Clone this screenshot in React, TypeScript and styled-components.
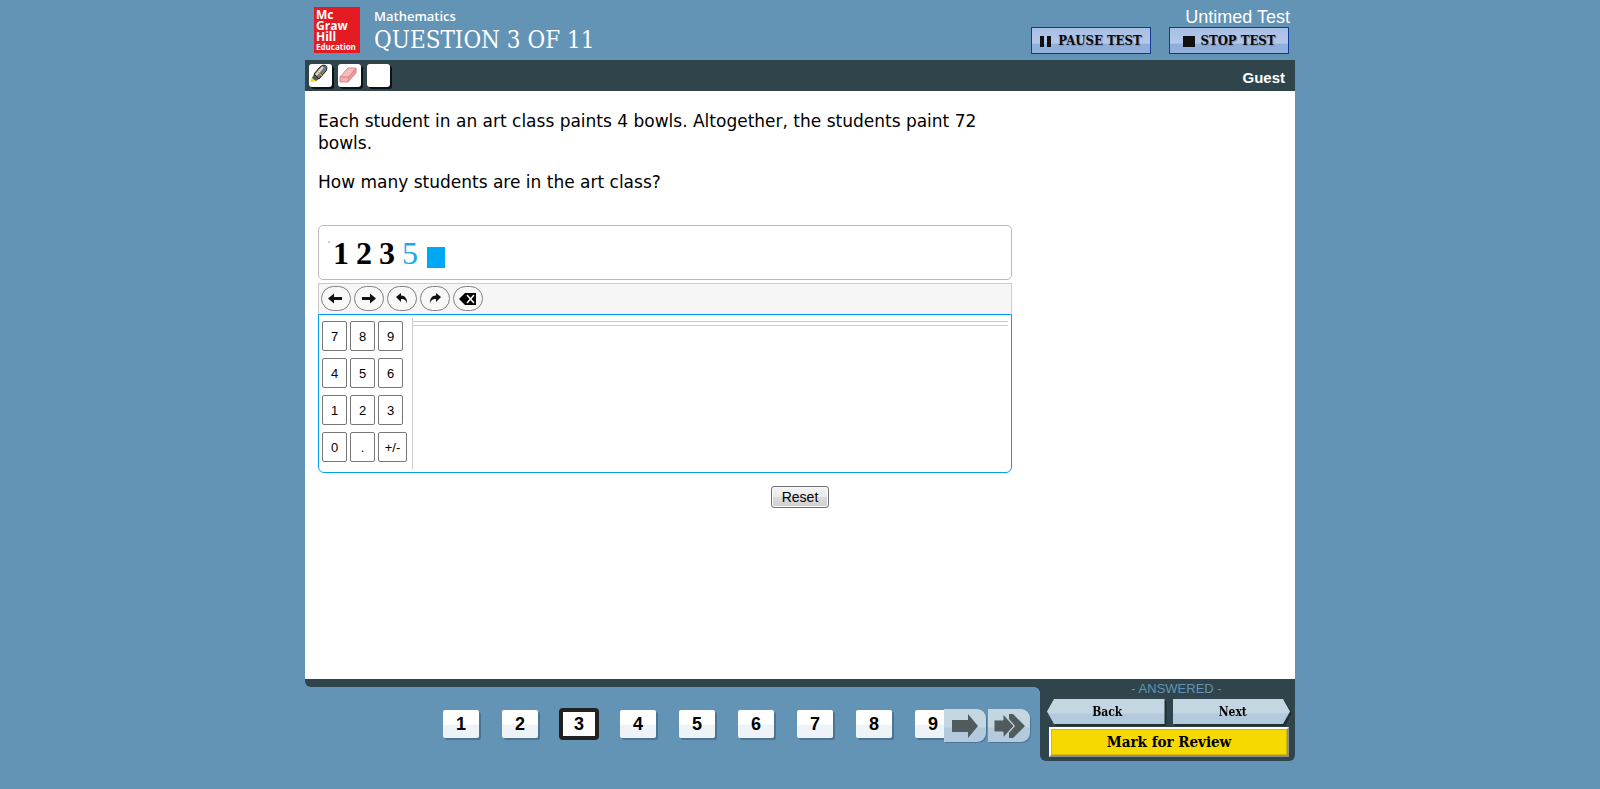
import React from 'react';
import styled, { createGlobalStyle, css } from 'styled-components';

const blue = '#6393b5';
const dark = '#2f454b';
const slab = "'DejaVu Serif Condensed', 'DejaVu Serif', serif";
const sans = "'Liberation Sans', Arial, sans-serif";
const humanist = "'Open Sans', 'Noto Sans', sans-serif";

const GlobalStyle = createGlobalStyle`
  * { box-sizing: border-box; }
  body { margin: 0; background: ${blue}; font-family: ${sans}; color: #000; }
  button { font: inherit; color: inherit; padding: 0; cursor: pointer; }
`;

const Page = styled.div`
  display: flex;
  flex-direction: column;
  max-width: 990px;
  min-height: 100vh;
  margin: 0 auto;
  padding-bottom: 28px;
`;

const Header = styled.header`
  display: flex;
  height: 60px;
  padding: 7px 5px 0 9px;
`;

const Logo = styled.div`
  display: flex;
  flex-direction: column;
  width: 46px;
  height: 46px;
  padding: 2px;
  background: #e51b24;
  color: #fff;
  font: 700 12px/11px ${humanist};
`;

const LogoSmall = styled.span`
  font-size: 8px;
  line-height: 10px;
`;

const Titles = styled.div`
  flex: 1;
  padding-left: 14px;
  color: #fff;
`;

const Subject = styled.div`
  font: 600 13px/18px ${humanist};
`;

const Title = styled.h1`
  margin: 0;
  font: 400 24px/30px ${slab};
`;

const Session = styled.div`
  display: flex;
  flex-direction: column;
  align-items: flex-end;
  color: #fff;
  font-size: 18px;
  line-height: 20px;
`;

const TestControls = styled.div`
  display: flex;
  gap: 18px;
  padding-right: 1px;
`;

const TestButton = styled.button`
  display: flex;
  align-items: center;
  justify-content: center;
  gap: 6px;
  width: 120px;
  height: 27px;
  border: 1px solid #12399a;
  background: linear-gradient(#a8bfe4, #b4c8e9 60%, #8faedb 65%, #93b0dc);
  color: #0c0a0c;
  font: 700 13px/24px ${slab};
  white-space: nowrap;
  text-shadow: 1px 1px 1px #8394b4;
`;

const Toolbar = styled.div`
  display: flex;
  align-items: center;
  gap: 6px;
  height: 31px;
  padding: 0 10px 0 4px;
  background: ${dark};
`;

const Tool = styled.button`
  display: flex;
  width: 23px;
  height: 23px;
  border: 0;
  border-radius: 3px;
  background: #fff;
  box-shadow: 2px 2px 0 #0b1214;
`;

const User = styled.span`
  margin-left: auto;
  padding-top: 4px;
  color: #fff;
  font-size: 15px;
  font-weight: 700;
`;

const Content = styled.main`
  flex: 1;
  padding: 19px 13px;
  background: #fff;
`;

const Question = styled.div`
  max-width: 694px;
  font: 400 17px/22px 'DejaVu Sans', Verdana, sans-serif;

  p { margin: 0 0 17px; }
`;

const Editor = styled.section`
  max-width: 694px;
  padding-top: 15px;
`;

const AnswerBox = styled.div`
  display: flex;
  align-items: center;
  gap: 7px;
  height: 55px;
  padding: 0 9px;
  border: 1px solid #bbb;
  border-radius: 5px;
  font: 700 32px/40px 'Liberation Serif', serif;
`;

const StartMark = styled.span`
  width: 2px;
  height: 2px;
  margin: 0 -4px 22px 0;
  background: #ccc;
`;

const CurrentDigit = styled.span`
  color: #1ca8ee;
  font-weight: 400;
`;

const Caret = styled.span`
  width: 18px;
  height: 21px;
  margin: 9px 0 0 2px;
  background: #00a8f3;
`;

const EditBar = styled.div`
  display: flex;
  gap: 3px;
  height: 31px;
  margin-top: 3px;
  padding: 2px;
  border: 1px solid #ccc;
  border-bottom: 0;
  background: #f6f6f6;
`;

const RoundButton = styled.button`
  display: flex;
  align-items: center;
  justify-content: center;
  width: 30px;
  height: 25px;
  border: 1px solid #808080;
  border-radius: 13px;
  background: #f8f8f8;
`;

const Pad = styled.div`
  display: flex;
  height: 159px;
  padding: 3px;
  border: 1px solid #00a3ea;
  border-radius: 0 0 6px 6px;
`;

const Keys = styled.div`
  display: grid;
  grid-template-columns: 25px 25px 29px;
  grid-auto-rows: 30px;
  gap: 7px 3px;
  width: 90px;
  padding-top: 3px;
`;

const Key = styled.button<{ $wide?: boolean }>`
  width: ${(p) => (p.$wide ? 29 : 25)}px;
  border: 1px solid #777;
  border-radius: 2px;
  background: #fff;
  font-size: 13px;
`;

const Symbols = styled.div`
  flex: 1;
  padding-top: 3px;
  border-left: 1px solid #ccc;
`;

const SymbolTabs = styled.div`
  height: 5px;
  border: solid #ccc;
  border-width: 1px 0;
`;

const ResetRow = styled.div`
  display: flex;
  justify-content: center;
  padding-top: 13px;
`;

const ResetButton = styled.button`
  width: 58px;
  height: 22px;
  border: 1px solid #707070;
  border-radius: 3px;
  background: linear-gradient(#f2f2f2, #ebebeb 50%, #ddd 50%, #cfcfcf);
  box-shadow: inset 0 0 0 1px #fafafa;
  font-size: 14px;
`;

const Footer = styled.footer`
  display: flex;
  height: 82px;
`;

const NavColumn = styled.div`
  flex: 1;
  min-width: 0;
`;

const NavEdge = styled.div`
  height: 8px;
  border-bottom-left-radius: 6px;
  background: ${dark};
`;

const Nav = styled.nav`
  display: flex;
  justify-content: flex-end;
  height: 74px;
  padding: 20px 10px 0 0;
  background: radial-gradient(circle at 0 100%, transparent 6px, ${dark} 6px) top right / 6px 6px no-repeat;
`;

const PageList = styled.div`
  display: flex;
  align-items: center;
  gap: 23px;
  width: 505px;
  height: 34px;
  padding-left: 4px;
  overflow: hidden;
`;

const PageButton = styled.button<{ $current?: boolean }>`
  flex: none;
  width: 36px;
  height: 28px;
  border: 0;
  border-radius: 2px;
  background: linear-gradient(#fff 50%, #edf3f7 54%);
  box-shadow: 2px 2px 0 #4c7592;
  font-size: 18px;
  line-height: 26px;
  font-weight: 700;
  ${(p) =>
    p.$current &&
    css`
      width: 40px;
      height: 32px;
      margin: 0 -2px;
      border: 4px solid #222021;
      border-radius: 4px;
      background: #fff;
      box-shadow: none;
      line-height: 22px;
    `}
`;

const Jumps = styled.div`
  display: flex;
  gap: 2px;
  padding-top: 2px;
`;

const JumpButton = styled.button`
  display: flex;
  align-items: center;
  justify-content: center;
  width: 42px;
  height: 33px;
  border: 0;
  border-radius: 0 9px 9px 0;
  background: linear-gradient(#c5d6e3 54%, #b3cade 58%);
  box-shadow: 1px 1px 0 #4c7592;
`;

const Actions = styled.div`
  width: 255px;
  padding: 2px 5px 0 7px;
  border-radius: 0 0 6px 6px;
  background: ${dark};
`;

const Status = styled.div`
  padding-left: 16px;
  color: ${blue};
  font-size: 13px;
  line-height: 16px;
  text-align: center;
`;

const StepRow = styled.div`
  display: flex;
  gap: 8px;
  padding-top: 2px;
  filter: drop-shadow(2px 2px 0 #1f3035);
`;

const StepButton = styled.button<{ $dir: 'back' | 'next' }>`
  flex: 1;
  height: 25px;
  border: 0;
  padding-left: 3px;
  background: linear-gradient(#c5d6e3 56%, #b3c9dc 60%);
  clip-path: ${(p) =>
    p.$dir === 'back'
      ? 'polygon(7px 0, 100% 0, 100% 100%, 7px 100%, 0 50%)'
      : 'polygon(0 0, calc(100% - 7px) 0, 100% 50%, calc(100% - 7px) 100%, 0 100%)'};
  font: 700 12px/24px ${slab};
`;

const ReviewButton = styled.button`
  display: block;
  width: 240px;
  height: 30px;
  margin: 3px 0 0 2px;
  border: 2px solid;
  border-color: #fff #8f8f8f #8f8f8f #fff;
  background: #f6d900;
  box-shadow: inset 0 0 0 1px #d8b800;
  font: 700 15px/24px ${slab};
`;

const Icon = ({ d, w = 16, h = 14 }: { d: string; w?: number; h?: number }) => (
  <svg width={w} height={h} viewBox={`0 0 ${w} ${h}`} fill="#111" aria-hidden="true">
    <path d={d} />
  </svg>
);

const editActions = [
  { label: 'Move left', d: 'M0 6.500 6 1.500V5h8v3H6v3.500Z' },
  { label: 'Move right', d: 'M15 6.500 9 1.500V5H1v3h8v3.500Z' },
  { label: 'Undo', d: 'M2 5 7 1v2.500c4 0 6.500 3 6 8.500C12.500 8.500 11 7 7 7v3Z' },
  { label: 'Redo', d: 'M14 5 9 1v2.500c-4 0-6.500 3-6 8.500C3.500 8.500 5 7 9 7v3Z' },
];

const keys = ['7', '8', '9', '4', '5', '6', '1', '2', '3', '0', '.', '+/-'];
const pages = [1, 2, 3, 4, 5, 6, 7, 8, 9];

export default function App() {
  return (
    <>
      <GlobalStyle />
      <Page>
        <Header>
          <Logo>
            <span>Mc</span>
            <span>Graw</span>
            <span>Hill</span>
            <LogoSmall>Education</LogoSmall>
          </Logo>
          <Titles>
            <Subject>Mathematics</Subject>
            <Title>QUESTION 3 OF 11</Title>
          </Titles>
          <Session>
            <span>Untimed Test</span>
            <TestControls>
              <TestButton>
                <Icon w={12} h={12} d="M0 1h4v11H0ZM7 1h4v11H7Z" />
                PAUSE TEST
              </TestButton>
              <TestButton>
                <Icon w={12} h={12} d="M0 1h12v11H0Z" />
                STOP TEST
              </TestButton>
            </TestControls>
          </Session>
        </Header>
        <Toolbar>
          <Tool aria-label="Highlighter">
            <svg width="23" height="23" viewBox="0 0 23 23">
              <path d="M1 18 3 13l5 4-4 1Z" fill="#f3df28" />
              <path d="M3 14 5 10l5 5-3 2Z" fill="#555" />
              <path d="M5 10 11 3q3-3 5.500-1.500t.5 5.500l-7 8Z" fill="#777" stroke="#222" />
              <path d="m7 11 7-8" stroke="#ddd" strokeWidth="2" />
              <path d="m8 7 5 5" stroke="#c9a52c" />
            </svg>
          </Tool>
          <Tool aria-label="Eraser">
            <svg width="23" height="23" viewBox="0 0 23 23" stroke="#d98a8a" strokeLinejoin="round">
              <path d="m2 13 8-9h8l-7 9Z" fill="#f6bcbc" />
              <path d="M2 13h9l-1 5H2Z" fill="#f3aeae" />
              <path d="m11 13 7-9v5l-8 9Z" fill="#e89a9a" />
            </svg>
          </Tool>
          <Tool aria-label="Blank tool" />
          <User>Guest</User>
        </Toolbar>
        <Content>
          <Question>
            <p>Each student in an art class paints 4 bowls. Altogether, the students paint 72 bowls.</p>
            <p>How many students are in the art class?</p>
          </Question>
          <Editor>
            <AnswerBox>
              <StartMark />
              <span>1</span>
              <span>2</span>
              <span>3</span>
              <CurrentDigit>5</CurrentDigit>
              <Caret />
            </AnswerBox>
            <EditBar>
              {editActions.map((a) => (
                <RoundButton key={a.label} aria-label={a.label}>
                  <Icon d={a.d} />
                </RoundButton>
              ))}
              <RoundButton aria-label="Delete">
                <svg width="18" height="14" viewBox="0 0 18 14">
                  <path d="M0 7 6 1h11v12H6Z" />
                  <path d="m8 3 7 8M15 3 8 11" stroke="#fff" strokeWidth="1.500" />
                </svg>
              </RoundButton>
            </EditBar>
            <Pad>
              <Keys>
                {keys.map((k) => (
                  <Key key={k} $wide={k === '+/-'}>
                    {k}
                  </Key>
                ))}
              </Keys>
              <Symbols>
                <SymbolTabs />
              </Symbols>
            </Pad>
          </Editor>
          <ResetRow>
            <ResetButton>Reset</ResetButton>
          </ResetRow>
        </Content>
        <Footer>
          <NavColumn>
            <NavEdge />
            <Nav>
              <PageList>
                {pages.map((n) => (
                  <PageButton key={n} $current={n === 3}>
                    {n}
                  </PageButton>
                ))}
              </PageList>
              <Jumps>
                <JumpButton aria-label="Next questions">
                  <svg width="28" height="24" viewBox="0 0 28 24">
                    <path d="M1 6h16V0l10 12-10 12v-6H1Z" fill="#4f5b5d" />
                  </svg>
                </JumpButton>
                <JumpButton aria-label="Last questions">
                  <svg width="32" height="24" viewBox="0 0 32 24" fill="#4f5b5d">
                    <path d="M16 0h4l12 12-12 12h-4v-5l6-7-6-7Z" />
                    <path d="M1 6h9V0l11 12-11 12v-6H1Z" stroke="#bfd1e0" />
                  </svg>
                </JumpButton>
              </Jumps>
            </Nav>
          </NavColumn>
          <Actions>
            <Status>- ANSWERED -</Status>
            <StepRow>
              <StepButton $dir="back">Back</StepButton>
              <StepButton $dir="next">Next</StepButton>
            </StepRow>
            <ReviewButton>Mark for Review</ReviewButton>
          </Actions>
        </Footer>
      </Page>
    </>
  );
}
